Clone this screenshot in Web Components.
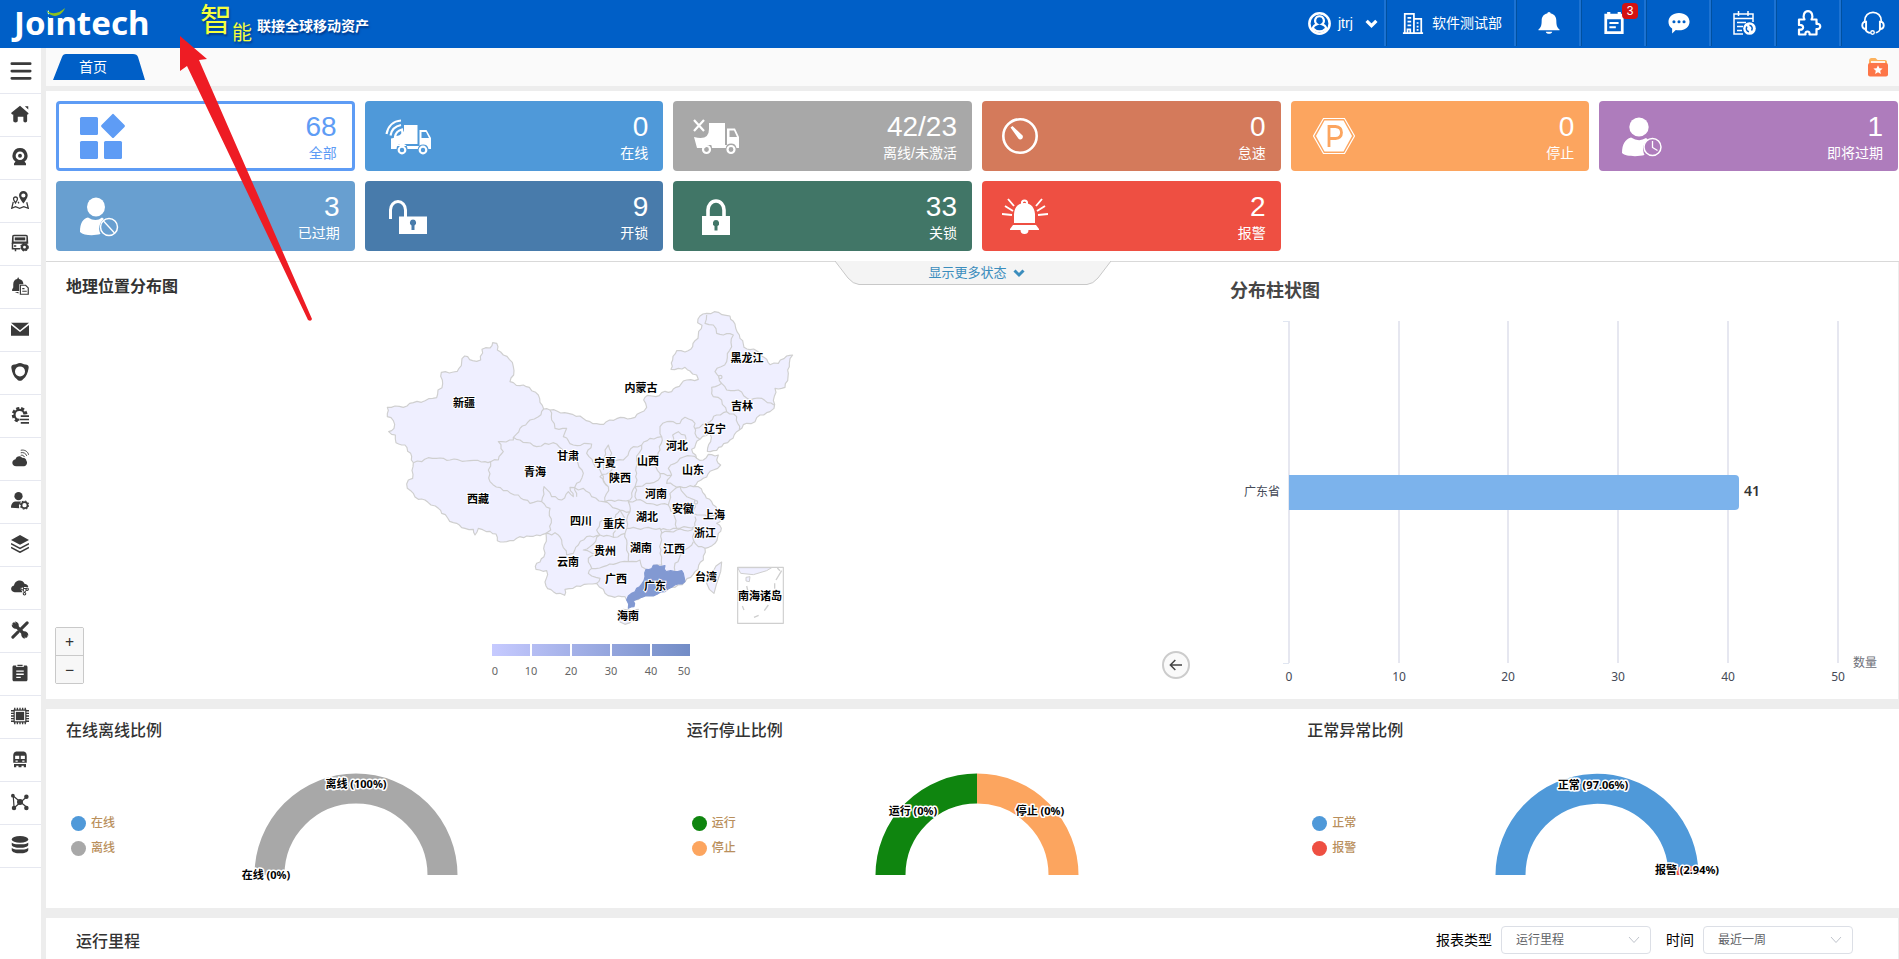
<!DOCTYPE html>
<html lang="zh-CN">
<head>
<meta charset="utf-8">
<title>首页</title>
<style>
html,body{margin:0;height:100%}
body{font-family:"Liberation Sans","Noto Sans CJK SC",sans-serif;font-size:14px;color:#333;background:#fff;overflow:hidden}
</style>
</head>
<body>
<dashboard-app></dashboard-app>
<script>
const ICONS = {
  menu:[24,'<path d="M2 4h20M2 12h20M2 20h20" stroke="currentColor" stroke-width="3" stroke-linecap="round"/>'],
  home:[24,'<path d="M12 1 23 10.500c1 1-.4 2.500-1.500 2V21c0 3-5 3-5 0v-5.500H9V21c0 3-6 3-6 0v-8.500H1.500L0 10.500z"/><path d="M18.500 1.500H23V6z"/>'],
  webcam:[24,'<path fill-rule="evenodd" d="M12 0a10 10 0 0 1 6 18l2 2.500V23H4v-2.500L6 18A10 10 0 0 1 12 0zm0 4.500a5.800 5.800 0 1 0 0 11.600 5.800 5.800 0 0 0 0-11.600z"/><circle cx="12" cy="10.300" r="2.600"/>'],
  route:[24,'<path fill-rule="evenodd" d="M16.500 0a5.800 5.800 0 0 1 5.800 5.800c0 3.500-3.200 7.200-5.800 11-2.600-3.800-5.800-7.500-5.800-11A5.800 5.800 0 0 1 16.500 0zm0 3.200a2.800 2.800 0 1 0 0 5.600 2.800 2.800 0 0 0 0-5.600z"/><path d="M6 8a2.600 2.600 0 0 1 2.600 2.600C8.600 12.500 7 14 6 15.800 5 14 3.400 12.500 3.400 10.600A2.600 2.600 0 0 1 6 8zM3 14.500 1 23l5-2 5.500 2 5.500-2 6 2-2-8M9.500 14.500l1 2M6 17.500v0" fill="none" stroke="currentColor" stroke-width="1.700"/>'],
  bus:[24,'<path fill-rule="evenodd" d="M4 1h16c1.500 0 2.500 1 2.500 2.500L23 12v1H1v-1l.5-8.500C1.500 2 2.500 1 4 1zm-.5 2v7h17V3z"/><path d="M5 4.500h14v4H5z"/><path d="M2 12v7.500h10M6 20v3M4 16h3" fill="none" stroke="currentColor" stroke-width="2"/><circle cx="18" cy="17.500" r="3.400" fill="none" stroke="currentColor" stroke-width="3"/><circle cx="18" cy="17.500" r="5" fill="none" stroke="currentColor" stroke-width="1.500" stroke-dasharray="2.200 1.900"/>'],
  bellDoc:[24,'<path d="M9.500 0l1.300 2.500c4 .8 5.700 3.500 5.700 7H11v9H1.500v-1.800L3 14V9.500c0-4 2-6.300 5.200-7z"/><path d="M5 20h5v2z"/><path d="M12.500 11h7l3.500 3.500V23H12.500zM15 15.500h3M15 19h6" fill="none" stroke="currentColor" stroke-width="1.600"/>'],
  mail:[24,'<path d="M0 3.500h24L12 13.500z"/><path d="M0 6.500l12 9.500 12-9.500V21H0z"/>'],
  shield:[24,'<path fill-rule="evenodd" d="M12 0c3 0 4.500 2 7 2 2.800-.3 5 1.500 4.500 4.500-1 6.500-3 12-7.500 15-2 3-6 3-8 0C3.500 18.500 1.500 13 .5 6.500 0 3.500 2.200 1.700 5 2c2.500 0 4-2 7-2zm0 4.500a6.700 6.700 0 1 0 0 13.400 6.700 6.700 0 0 0 0-13.400z"/>'],
  gearList:[24,'<path d="M20 11a8.500 8.500 0 1 0-9 9.200" fill="none" stroke="currentColor" stroke-width="4" stroke-dasharray="4 2.400"/><path d="M18 11a6.700 6.700 0 1 0-7 7.500" fill="none" stroke="currentColor" stroke-width="3"/><path d="M13 13.500h11M11.500 18h12.500M13 22.500h11" stroke="currentColor" stroke-width="2.200"/>'],
  cloudWifi:[24,'<path d="M7 23c-6.500 0-7-8-1-9.200 1-4.500 6.500-5.500 9-2 4 0 5.500 2 5.500 4 2 2 .5 7.200-3 7.200z"/><path d="M13 8.500c2-.8 4 0 5 2.300M13 5c3.500-1 7 .8 8 4.200M13 1.700c5-1.200 9.500 1.600 10.500 6" fill="none" stroke="currentColor" stroke-width="1.200"/>'],
  userGear:[24,'<circle cx="10" cy="5.500" r="5.500"/><path d="M0 21c0-6 3-8.500 7-8.500h6.500l-3 5.500.5 3.500z"/><circle cx="18" cy="17.500" r="4" fill="none" stroke="currentColor" stroke-width="2.200"/><circle cx="18" cy="17.500" r="5.500" fill="none" stroke="currentColor" stroke-width="1.400" stroke-dasharray="2.200 2.100"/>'],
  layers:[24,'<path d="M12 0 24 6.500 12 13 0 6.500z"/><path d="M0 11.500 12 18l12-6.500M0 16.500 12 23l12-6.500" fill="none" stroke="currentColor" stroke-width="2"/>'],
  cloudFilter:[24,'<path d="M5 19c-6 0-6.500-8-1-9 .8-7 11-9.500 14-2.500 3.500.5 5 2.500 5 4.500l-9.500 0-1 2.500 3 4.500z"/><circle cx="15" cy="14" r="1.900" fill="none" stroke="currentColor" stroke-width="1.400"/><circle cx="21.500" cy="15" r="1.700" fill="none" stroke="currentColor" stroke-width="1.400"/><circle cx="18" cy="21" r="1.700" fill="none" stroke="currentColor" stroke-width="1.400"/><path d="M16 15.500l2 4 3-4M17 14h4" fill="none" stroke="currentColor" stroke-width="1.300"/>'],
  tools:[24,'<path d="M4 4l16 16" stroke="currentColor" stroke-width="4.400" stroke-linecap="round"/><path d="M21.500 2.500l-8 8M9.500 14.500l-7 7" stroke="currentColor" stroke-width="4" stroke-linecap="round"/><path d="M1 4.500a5 5 0 0 0 6.500 5.500L10 7.500A5 5 0 0 0 5 .8L7 4 4.500 6.500zM23 19.500a5 5 0 0 0-6.500-5.500L14 16.500a5 5 0 0 0 5 6.700L17.500 20l2-2z"/>'],
  clipboard:[24,'<path fill-rule="evenodd" d="M4 2h3v2h10V2h3c1.200 0 2 .8 2 2v17c0 1.200-.8 2-2 2H4c-1.200 0-2-.8-2-2V4c0-1.200.8-2 2-2zm3 6.500v1.800h10V8.500zm0 4.200v1.800h10v-1.800zM7 17v1.800h6V17z"/><path d="M8.500 1h7v2h-7z"/>'],
  chip:[24,'<path d="M6.500 6.500h11v11h-11z"/><path d="M4.200 4.200h15.600v15.600H4.200z" fill="none" stroke="currentColor" stroke-width="1.600"/><path d="M5 1v3M8.500 1v3M12 1v3M15.500 1v3M19 1v3M5 20v3M8.500 20v3M12 20v3M15.500 20v3M19 20v3M0 5h4M0 8.500h4M0 12h4M0 15.500h4M0 19h4M20 5h4M20 8.500h4M20 12h4M20 15.500h4M20 19h4" stroke="currentColor" stroke-width="1.800"/>'],
  train:[24,'<path fill-rule="evenodd" d="M8 2h8c4 0 5 3 5 6v9H3V8c0-3 1-6 5-6zM5.500 7.500V12H11V7.500zm7.500 0V12h5.500V7.500zM6 14v1.500h3V14zm9 0v1.500h3V14z"/><path d="M8 .8h8M4 18.500h16V23h-3v-2h-3v2h-4v-2H7v2H4z" fill-rule="evenodd"/>'],
  nodes:[24,'<path d="M3 4l18 15M21 5 4 20M3 4l1 14" stroke="currentColor" stroke-width="1.600"/><circle cx="12" cy="12" r="4"/><circle cx="2.500" cy="3.500" r="2.500"/><circle cx="20.500" cy="5" r="3"/><circle cx="4" cy="20" r="3"/><circle cx="20.500" cy="20" r="3"/>'],
  database:[24,'<ellipse cx="12" cy="4.500" rx="11" ry="4.500"/><path d="M1 8.500c2 3.500 20 3.500 22 0v3.500c-1 5-21 5-22 0zM1 15.500c2 3.500 20 3.500 22 0V19c-1 5.500-21 5.500-22 0z"/>'],
  avatar:[24,'<circle cx="12" cy="12" r="10.600" fill="none" stroke="currentColor" stroke-width="2.600"/><path d="M12 4.500a4.500 4.500 0 0 1 2.500 8.300c2.500.8 4 2 4.600 4.200a9.500 9.500 0 0 1-14.200 0c.6-2.200 2.100-3.400 4.600-4.200A4.500 4.500 0 0 1 12 4.500z" fill="none" stroke="currentColor" stroke-width="2.200"/>'],
  chevron:[24,'<path d="M3 7l9 9 9-9" fill="none" stroke="currentColor" stroke-width="6"/>'],
  building:[24,'<path d="M3 23V2h10v21M13 7.500h8V23M1 23h22M6 6.500h4M6 10.500h4M6 14.500h4M16 12h2M16 16h2M16 19.500h2M6 23v-4h3v4" fill="none" stroke="currentColor" stroke-width="1.900"/>'],
  bell:[24,'<path d="M12 0c1.200 0 1.800.8 1.900 1.700C18 2.500 20 5.500 20 9.500c0 5 .8 7.500 3.500 9.500v1H.5v-1C3.200 17 4 14.500 4 9.500c0-4 2-7 6.100-7.800C10.200.8 10.800 0 12 0zM8.500 21.500h7c-.5 3-6.500 3-7 0z"/>'],
  task:[24,'<path fill-rule="evenodd" d="M1.500 2h3V0H8v2h8V0h3.500v2h3v22h-21zm3 6v13h15V8zM7 11h10v2.200H7zm0 4.500h7v2.200H7z"/>'],
  chat:[24,'<path fill-rule="evenodd" d="M12 1c6.600 0 11.500 4 11.500 9.500S18.600 20 12 20c-1.500 0-2.500-.2-3.500-.4L4.500 23.500V18C1.800 16.300.5 13.500.5 10.500.5 5 5.400 1 12 1zM6.500 9a1.700 1.700 0 1 0 0 3.400 1.700 1.700 0 0 0 0-3.400zm5.500 0a1.700 1.700 0 1 0 0 3.400A1.700 1.700 0 0 0 12 9zm5.500 0a1.700 1.700 0 1 0 0 3.400 1.700 1.700 0 0 0 0-3.400z"/>'],
  schedule:[24,'<path d="M21 11V3H2v20h9M2 7.500h19M6.500 0v5M16 0v5M5 11.500h9M5 15.500h6M5 19.500h5" fill="none" stroke="currentColor" stroke-width="1.500"/><circle cx="17.500" cy="17.500" r="6.300"/><path d="M15 15.500a3.300 3.300 0 0 0 2 5.300M19.500 19.500a3.300 3.300 0 0 0-2-5.300" fill="none" stroke="#005fc7" stroke-width="1.500"/>'],
  puzzle:[26,'<path d="M3 12V9.500h5.500C6.500 6 8 1.200 12 1.200s5.500 4.800 3.500 8.300h5V14c5-1.200 5 6 0 5v5.500h-7c1-4-5-4-4 0H3V19.500c5.500 1.500 5.500-5.500 0-4.500z" fill="none" stroke="currentColor" stroke-width="2.200" stroke-linejoin="round"/>'],
  headset:[26,'<path d="M4 13v-2C4 5 8 1.500 13 1.500S22 5 22 11v2" fill="none" stroke="currentColor" stroke-width="1.900"/><path d="M5.500 11.500v8C0 20 0 11.500 5.500 11.500zM20.500 11.500v8c5.500.5 5.500-8 0-8zM4.500 19.500c1 3 3 4 6 4.200" fill="none" stroke="currentColor" stroke-width="2.100"/><circle cx="12.500" cy="23.300" r="1.900" fill="none" stroke="currentColor" stroke-width="1.500"/><path d="M21 19.500c-1 2.500-2.500 3.700-5 4" fill="none" stroke="currentColor" stroke-width="1.500"/>'],
  favorites:[20,'<path d="M1 4c0-2 1-3 2.500-3h4l2 2H17c1 0 2 .8 2 2v3H1z" fill="#fcb15c"/><path d="M3 4h14v3H3z" fill="#fff3e6"/><rect y="6" width="20" height="13.500" rx="2" fill="#fd7648"/><path d="M10 8.200l1.400 3 3.200.3-2.400 2.200.7 3.200-2.900-1.700-2.900 1.700.7-3.200-2.400-2.200 3.200-.3z" fill="#fff"/>'],
  arrowLeft:[24,'<path d="M21 12H4M11 4.500 3.500 12l7.500 7.500" fill="none" stroke="currentColor" stroke-width="2.200"/>'],
  all:[50,'<rect x="4" y="6" width="18" height="18" rx="1.500"/><rect x="4" y="30" width="18" height="18" rx="1.500"/><rect x="28" y="30" width="18" height="18" rx="1.500"/><path d="M36 3.500q1-1.500 2 0l10.500 10.500q1 1 0 2L38 26.500q-1 1-2 0L25.500 16q-1-1 0-2z"/>'],
  online:[50,'<path d="M19 14h13.500v19H14l-1 2H6v-7.500l7.500-1.500L19 20z"/><path fill-rule="evenodd" d="M34.500 19h7L46 27v11h-2.500a5.500 5.500 0 0 0-10.800 0H22.500a5.500 5.500 0 0 0-11 0H6v-3h28.500zm2 2v6h7.500l-3-6z"/><circle cx="17" cy="39" r="3.300" fill="none" stroke="currentColor" stroke-width="2.200"/><circle cx="38" cy="39" r="3.300" fill="none" stroke="currentColor" stroke-width="2.200"/><path d="M5 26.500v-3q2-5 10-7.500h2v5q0 3-3 4z" fill="#4f99d9"/><path d="M1.500 23C3 15 8.500 10 16 9.500M5.500 24.500C6.500 18.500 10.500 15 16 14M10 26c.5-4 3-6.500 7-7.500l.5 4q-2 4-7.500 3.500z" fill="none" stroke="currentColor" stroke-width="2.200"/>'],
  offline:[50,'<path d="M16 12h16v22H14l-2 3H4L1 26q15 4 15-8z"/><path fill-rule="evenodd" d="M34 17.500h8L46 26v11h-2.500a5.500 5.500 0 0 0-10.800 0H19a5.500 5.500 0 0 0-11 0H4v-3h30zm2.500 2V26h7.500l-3-6.500z"/><circle cx="13.500" cy="38.500" r="3.500" fill="none" stroke="currentColor" stroke-width="2.200"/><circle cx="38" cy="38.500" r="3.500" fill="none" stroke="currentColor" stroke-width="2.200"/><path d="M1 9l10 11M11 9 1 20" stroke="currentColor" stroke-width="2.200"/>'],
  idle:[50,'<circle cx="18" cy="25" r="16.700" fill="none" stroke="currentColor" stroke-width="2.600"/><path d="M8.500 16.500 10.500 15l9 8.500a2.600 2.600 0 1 1-3.500 3.500z"/>'],
  parking:[50,'<path d="M12.500 7.500h21L43.500 25l-10 17.500h-21L2.500 25z" fill="none" stroke="currentColor" stroke-width="1.200"/><path d="M13.500 9.500h19L41 25l-8.500 15.500h-19L5 25z"/><path d="M18 36V15.500h6.500q6 .5 6 6t-6 6H18" fill="none" stroke="#fca55f" stroke-width="2.800"/>'],
  expiring:[50,'<ellipse cx="20" cy="16" rx="9.700" ry="9.500"/><path d="M3 42c0-9 3-13.500 9-15.500q8 5 15 .5l2 1.500c-5 4-6 10-3.500 15.500-7 2-19 1.500-22.500-2z"/><circle cx="33.500" cy="36" r="8.500" fill="none" stroke="currentColor" stroke-width="1.500"/><path d="M33.500 30v6.500l5 3" fill="none" stroke="currentColor" stroke-width="1.300"/>'],
  expired:[50,'<ellipse cx="20" cy="16" rx="9" ry="9.500"/><path d="M4 41c0-9 3-13.500 8-14.500q8 5 14 0l2 1.500c-5 4-6 10-3.500 15-7 2-17 1.500-20.500-2z"/><circle cx="33" cy="36" r="8.500" fill="none" stroke="currentColor" stroke-width="1.500"/><path d="M27.500 30l11 12" fill="none" stroke="currentColor" stroke-width="1.300"/>'],
  unlock:[50,'<path d="M5.500 28V19a7.500 8.500 0 0 1 15 0v7" fill="none" stroke="currentColor" stroke-width="3"/><path fill-rule="evenodd" d="M14 25.500h28V43H14zm14 3a3.200 3.200 0 0 0-1.500 6V39h3v-4.500a3.200 3.200 0 0 0-1.500-6z"/>'],
  lock:[50,'<path d="M15 26v-7a8 9 0 0 1 16 0v7" fill="none" stroke="currentColor" stroke-width="3.600"/><path fill-rule="evenodd" d="M9 25h28v19H9zm14 4a3.200 3.200 0 0 0-1.500 6v4.500h3V35a3.200 3.200 0 0 0-1.500-6z"/>'],
  alarm:[50,'<circle cx="22.500" cy="12" r="2.600" fill="none" stroke="currentColor" stroke-width="2"/><path d="M22.500 12c7 0 10 5 10.500 11v9H12v-9c.5-6 3.500-11 10.500-11zM11 34h23l3 4v1H26.500q0 4-4 4t-4-4H8v-1z"/><path d="M6 8l6 7M3 15l8 5M0 23l10 1M40 8l-6 7M43 15l-8 5M46 23l-10 1" stroke="currentColor" stroke-width="1.900"/>']
};

class BaseElement extends HTMLElement {
  connectedCallback() {
    if (this.shadowRoot) return;
    this.attachShadow({ mode: 'open' }).innerHTML = `<style>*{box-sizing:border-box}</style>` + this.render();
  }
  attr(name, fallback = '') { return this.getAttribute(name) || fallback; }
}

class UiIcon extends BaseElement {
  render() {
    const [box, body] = ICONS[this.attr('name')];
    const size = this.attr('size', '20');
    return `<style>:host{display:inline-block;flex:none;width:${size}px;height:${size}px}svg{display:block}</style>
      <svg width="${size}" height="${size}" viewBox="0 0 ${box} ${box}" fill="currentColor" aria-hidden="true">${body}</svg>`;
  }
}

class AppHeader extends BaseElement {
  render() {
    return `<style>
      :host{display:flex;height:48px;background:#005fc7;color:#fff;overflow:hidden}
      .logo{position:relative;margin-left:14px;width:172px;font:700 33px/46px "Noto Sans",sans-serif;color:#fff;text-decoration:none}
      .logo svg{position:absolute;left:31px;top:7px}
      .slogan{display:flex;flex:1;align-items:flex-start;padding-left:14px;margin:0;font-weight:700;color:#fff;text-shadow:1px 2px 2px #00398a}
      .big{font-size:32px;line-height:40px;color:#f5ff3d;font-weight:400}
      .mid{font-size:20px;line-height:66px;color:#f5ff3d;font-weight:400}
      .rest{font-size:14px;line-height:52px;padding-left:5px}
      nav{display:flex}
      button{display:flex;align-items:center;justify-content:center;position:relative;width:65px;height:46px;margin:0;padding:0 0 0 3px;border:0;border-left:2px solid #1c72d2;box-shadow:inset 1px 0 #00509f;background:none;color:#fff;font:14px/20px "Liberation Sans","Noto Sans CJK SC",sans-serif;white-space:nowrap}
      .user{width:auto;border:0;box-shadow:none;padding:0 6px 0 0}
      .user span{width:27px;margin-left:7px;text-align:left}
      .dept{width:130px;justify-content:flex-start;padding-left:16px}.dept span{margin-left:8px}
      button:last-child{width:60px;padding-left:6px}
      .badge{position:absolute;left:41px;top:3px;width:16px;height:16px;border-radius:4px;background:#d31111;font-size:12px;line-height:16px;text-align:center}
    </style>
    <a class="logo" href="#">Jointech<svg width="22" height="12" viewBox="0 0 22 12"><path d="M4 0h14v11H4z" fill="#005fc7"/><path d="M1 3c6 5 12 4 19-2-3 8-13 12-19 2z" fill="#8cc11f"/><path d="M4 7q7 5 12-1-5 6-12 1z" fill="#3d8f1d"/></svg></a>
    <p class="slogan"><span class="big">智</span><span class="mid">能</span><span class="rest">联接全球移动资产</span></p>
    <nav>
      <button class="user"><ui-icon name="avatar" size="23"></ui-icon><span>jtrj</span><ui-icon name="chevron" size="13"></ui-icon></button>
      <button class="dept"><ui-icon name="building" size="22"></ui-icon><span>软件测试部</span></button>
      <button aria-label="通知"><ui-icon name="bell" size="22"></ui-icon></button>
      <button aria-label="任务"><ui-icon name="task" size="22"></ui-icon><span class="badge">3</span></button>
      <button aria-label="消息"><ui-icon name="chat" size="22"></ui-icon></button>
      <button aria-label="日程"><ui-icon name="schedule" size="24"></ui-icon></button>
      <button aria-label="插件"><ui-icon name="puzzle" size="26"></ui-icon></button>
      <button aria-label="客服"><ui-icon name="headset" size="24"></ui-icon></button>
    </nav>`;
  }
}

class SideNav extends BaseElement {
  render() {
    const names = ['home','webcam','route','bus','bellDoc','mail','shield','gearList','cloudWifi','userGear','layers','cloudFilter','tools','clipboard','chip','train','nodes','database'];
    return `<style>
      :host{display:flex;flex-direction:column;flex:none;width:46px;background:#fff;border-right:5px solid #ededed;color:#3a3a3a}
      a,button{display:flex;flex:none;align-items:center;justify-content:center;height:43px;padding:0 1px 2px 0;border:0;border-bottom:1px solid #e6e8f0;background:none;color:inherit}
      button{height:46px;padding:0}
    </style><button aria-label="菜单"><ui-icon name="menu" size="22"></ui-icon></button>
    ${names.map(n => `<a href="#${n}" aria-label="${n}"><ui-icon name="${n}" size="18"></ui-icon></a>`).join('')}`;
  }
}

class TabStrip extends BaseElement {
  render() {
    return `<style>
      :host{display:flex;align-items:center;justify-content:space-between;height:38px;background:#fafafa;padding:0 11px 0 7px}
      a{width:92px;height:26px;background:#005fc7;color:#fff;font-size:14px;line-height:26px;padding-left:26px;text-decoration:none;clip-path:path("M0 26 9 3Q10 0 13 0H80Q84 0 85 3L92 26z")}
    </style><a href="#home">首页</a><ui-icon name="favorites" size="20"></ui-icon>`;
  }
}

class StatusCard extends BaseElement {
  render() {
    const c = this.attr('color');
    const outlined = this.hasAttribute('outlined');
    return `<style>
      :host{display:flex;justify-content:space-between;height:70px;border-radius:4px;overflow:hidden;padding:10px 15px 0 20px;
        ${outlined ? `background:#fff;color:${c};border:3px solid ${c};padding:7px 15px 0 17px` : `background:${c};color:#fff`}}
      div{text-align:right}
      strong{display:block;font:400 28px/32px "Liberation Sans",sans-serif}
      span{display:block;font-size:14px;line-height:20px}
    </style><ui-icon name="${this.attr('icon')}" size="50"></ui-icon><div><strong>${this.attr('value')}</strong><span><slot></slot></span></div>`;
  }
}

class StatusPanel extends BaseElement {
  render() {
    return `<style>
      :host{display:grid;grid-template-columns:repeat(6,1fr);gap:10px;padding:10px 0 10px 10px;background:#fff;border-bottom:1px solid #d9d9d9}
    </style>
    <status-card outlined icon="all" value="68" color="#5e9cf5">全部</status-card>
    <status-card icon="online" value="0" color="#4f99d9">在线</status-card>
    <status-card icon="offline" value="42/23" color="#a8a8a8">离线/未激活</status-card>
    <status-card icon="idle" value="0" color="#d47a5b">怠速</status-card>
    <status-card icon="parking" value="0" color="#fca55f">停止</status-card>
    <status-card icon="expiring" value="1" color="#ae7cbc">即将过期</status-card>
    <status-card icon="expired" value="3" color="#689fd0">已过期</status-card>
    <status-card icon="unlock" value="9" color="#487bab">开锁</status-card>
    <status-card icon="lock" value="33" color="#417667">关锁</status-card>
    <status-card icon="alarm" value="2" color="#ee4f42">报警</status-card>`;
  }
}

/* Coast and province borders, three units to a pixel. */
const COUNTRY = '52,322 75,318 100,322 130,308 165,302 200,293 204,270 216,263 214,217 262,214 284,168 308,182 332,180 336,148 360,144 368,128 380,130 382,150 400,165 418,178 430,200 431,225 420,245 450,257 478,262 505,285 521,327 540,330 595,340 630,348 660,365 690,373 740,356 795,352 810,338 830,322 821,300 832,286 858,290 875,278 905,275 918,262 950,240 985,238 980,225 960,213 945,202 925,205 903,208 908,180 920,152 945,156 968,140 985,105 996,76 983,68 990,48 1010,40 1045,37 1080,48 1095,72 1108,105 1122,142 1160,152 1190,178 1200,194 1225,190 1250,168 1268,165 1258,190 1255,220 1245,262 1215,265 1212,325 1200,335 1170,345 1155,365 1130,370 1108,390 1080,420 1055,440 1030,452 1012,454 1022,425 1020,400 990,418 965,448 980,475 1000,480 1015,463 1045,465 1040,480 1052,495 1030,510 1000,535 970,560 985,560 1005,585 1025,605 1040,630 1055,650 1050,665 1040,670 1054,685 1045,700 1035,730 1005,745 1000,780 975,815 945,845 915,862 880,868 850,885 815,890 795,900 770,900 765,890 735,892 705,880 700,868 680,850 655,852 620,858 585,868 584,886 570,880 550,875 528,858 530,812 498,808 500,790 522,770 528,700 500,705 470,708 440,715 410,725 382,722 378,702 350,695 325,685 315,705 310,688 285,685 250,668 215,640 205,625 165,600 145,598 112,565 115,540 128,535 130,488 122,460 105,435 78,428 76,405 56,395 72,385 70,362 52,350 52,322';
const GUANGDONG = '850,796 870,800 885,797 888,815 915,815 935,812 942,830 945,845 905,862 885,875 850,888 815,892 790,902 792,920 775,925 770,900 785,880 800,865 815,852 825,830 828,808 845,806 850,796';
const BORDERS = [
  '130,488 155,485 175,473 200,475 240,480 300,482 345,485 362,485',
  '362,485 385,480 400,455 385,425 430,420 430,412 450,385 480,360 505,350 521,327',
  '540,330 545,360 555,385 590,385 580,410 610,435 665,432 650,460 670,490 690,510 700,540 715,560',
  '430,412 450,420 500,440 525,430 560,432 590,470 620,480 640,520 630,545 615,560 620,590',
  '362,485 355,510 360,545 400,572 445,585 480,610 515,605',
  '515,605 522,560 545,590 575,600 595,575 610,590 600,562 625,570 640,565 665,590 700,605',
  '515,605 540,625 542,690 528,700',
  '528,700 545,705 555,698 575,720 590,765 610,760 625,735 650,710 690,705',
  '700,605 750,630 735,655 690,665 680,690 690,705 730,712 740,680 765,665 750,630 780,635',
  '690,705 660,740 640,750 675,765 655,775 665,805 700,800 740,790 775,785 770,740 765,700 730,712',
  '665,805 655,820 690,835 680,850',
  '775,785 810,780 815,800 828,808',
  '765,700 770,685 800,685 870,685 875,720 870,760 875,795 850,796',
  '780,635 770,660 770,685','780,635 775,605 800,600 850,612 895,615 910,640 920,685 870,690',
  '800,600 795,560 840,550 865,540 870,520 905,525 890,550 930,560 900,580 895,615',
  '930,560 950,590 975,600 970,640 1005,645 1045,650','975,650 975,680 920,685',
  '705,605 715,560 690,530 725,510 730,485 760,480 790,440 815,435 800,480 800,520 795,560 780,600',
  '705,605 745,600 780,600','815,435 840,415 875,410 870,450 855,490 870,520',
  '875,410 870,380 890,365 930,370 945,352 975,370 975,400 990,418',
  '910,425 908,405 925,395 945,405 945,425 955,450 930,445 925,425',
  '905,525 895,505 930,475 965,468 980,475','930,560 970,560',
  '975,385 1010,370 1040,345 1070,335 1100,350 1108,390',
  '1070,335 1055,300 1030,290 1025,262 1055,250 1070,270 1105,270 1140,300 1175,295 1212,315',
  '1055,250 1035,215 1070,185 1090,105 1040,100 1030,75 1005,70 1010,45',
  '975,680 970,720 985,740 1005,745','875,700 920,690 965,690 975,680',
  '970,725 940,760 915,790 915,815','700,510 705,450 715,435 725,460 715,480 735,490'
];
const wander = (text) => {
  const pts = text.split(' ').map(p => p.split(',').map(Number));
  let d = `M${pts[0]}`;
  for (let i = 1; i < pts.length; i++) {
    const [ax, ay] = pts[i - 1], [bx, by] = pts[i];
    const len = Math.hypot(bx - ax, by - ay), n = Math.max(1, Math.round(len / 11));
    for (let k = 1; k < n; k++) {
      const t = k / n, off = Math.sin(ax * 1.3 + ay * 2.1 + k * 4.7) * 3.5;
      d += `L${Math.round(ax + (bx - ax) * t - (by - ay) / len * off)},${Math.round(ay + (by - ay) * t + (bx - ax) / len * off)}`;
    }
    d += `L${bx},${by}`;
  }
  return d;
};

class RegionMap extends BaseElement {
  render() {
    const names = [['新疆',94,103],['西藏',108,199],['青海',165,172],['甘肃',198,156],['内蒙古',271,88],['宁夏',235,163],['陕西',250,178],['山西',278,161],['河北',307,146],['山东',323,170],['河南',286,194],['安徽',313,209],['上海',344,215],['浙江',335,233],['湖北',277,217],['重庆',244,224],['四川',211,221],['贵州',235,251],['湖南',271,248],['江西',304,249],['云南',198,262],['广西',246,279],['广东',285,286],['海南',258,316],['台湾',336,277],['南海诸岛',390,296],['黑龙江',377,58],['吉林',372,106],['辽宁',345,129]];
    return `<style>
      :host{display:block;position:relative;padding:13px 0 9px}
      h2{margin:0 20px;font-size:16px;line-height:24px;font-weight:700;color:#333}
      svg.map{display:block;margin:0 auto}
      .names text{font:700 11px "Noto Sans CJK SC",sans-serif;fill:#000;stroke:#fff;stroke-width:2px;paint-order:stroke;text-anchor:middle}
      .scale text{font:11px "Noto Sans",sans-serif;fill:#666;text-anchor:middle}
      .zoom{position:absolute;left:9px;bottom:15px;display:flex;flex-direction:column;width:29px;border:1px solid #c9c9c9;border-radius:2px;background:#c9c9c9;gap:1px}
      .zoom button{height:27px;border:0;padding:0;background:#f7f7f7;color:#333;font:16px/24px "Noto Sans",sans-serif}
    </style>
    <h2>地理位置分布图</h2>
    <svg class="map" width="450" height="391" viewBox="-4 -1 450 391" role="img" aria-label="地理位置分布图">
      <defs><linearGradient id="ramp" gradientUnits="userSpaceOnUse" x1="122" x2="320" y1="0" y2="0"><stop stop-color="#c6caff"/><stop offset="1" stop-color="#728cc6"/></linearGradient></defs>
      <g transform="scale(.33333)" fill="#efefff" stroke="#cfcfcf" stroke-width="3.500" stroke-linejoin="round">
        <path d="${wander(COUNTRY)}Z"/>
        <path fill="none" d="${BORDERS.map(wander).join('')}"/>
        <circle cx="1051" cy="231" r="5"/><circle cx="978" cy="607" r="5"/>
        <path d="M742,940 760,928 785,932 805,928 800,945 780,968 765,973 750,966Z"/>
        <path d="M1055,786 1038,798 1010,850 1018,868 1032,880 1040,850 1052,815Z"/>
        <path fill="#8299d2" stroke="#8299d2" d="${wander(GUANGDONG)}Z"/>
        <path fill="#fff" d="M1103,802H1240V970H1103z"/>
        <path stroke-width="3" d="M1103,803 1112,820 1150,824 1190,812 1205,803zM1128,832 1140,830 1138,845 1128,843z"/>
        <path fill="none" stroke-width="4" d="M1222,804 1230,812M1235,812 1218,840M1214,850V866M1130,858 1133,870M1117,918 1122,930M1195,915 1183,932M1152,952 1166,946M1207,880 1203,895"/>
      </g>
      <g class="names">${names.map(([n, x, y]) => `<text x="${x}" y="${y + 4}">${n}</text>`).join('')}</g>
      <g class="scale"><path fill="url(#ramp)" d="M122 344h38v12h-38zM162 344h38v12h-38zM202 344h38v12h-38zM242 344h38v12h-38zM282 344h38v12h-38z"/>
      ${[[0,125],[10,161],[20,201],[30,241],[40,281],[50,314]].map(([n, x]) => `<text x="${x}" y="375">${n}</text>`).join('')}</g>
    </svg>
    <div class="zoom"><button aria-label="放大">+</button><button aria-label="缩小">−</button></div>`;
  }
}

class BarChart extends BaseElement {
  render() {
    const ticks = [0, 10, 20, 30, 40, 50].map((n, i) => [n, 153 + i * 110 - (i > 1 ? 1 : 0)]);
    return `<style>
      :host{display:block;position:relative;padding-top:15px;border-right:1px solid #ededed}
      h2{margin:0 0 0 94px;font:700 18px/24px "Noto Sans CJK SC",sans-serif;color:#464646}
      svg{display:block;width:100%}
      text{font:12px "Noto Sans","Noto Sans CJK SC",sans-serif;fill:#454a57}
      .mid{text-anchor:middle}.end{text-anchor:end}.value{font-weight:600;font-size:14px;fill:#333}.unit{fill:#6e7079}
      button{position:absolute;left:26px;bottom:20px;display:grid;place-items:center;width:28px;height:28px;padding:0;border:2px solid #ccc;border-radius:50%;background:#fafafa;color:#444}
    </style>
    <h2>分布柱状图</h2>
    <svg viewBox="0 0 762 397" role="img" aria-label="分布柱状图">
      <path d="${ticks.map(([, x]) => `M${x} 20V362`).join('')}" stroke="#e6e7f0" stroke-width="2"/>
      <path d="M147 20.500h6M147 362.500h6" stroke="#e0e6f1"/>
      <path d="M153 174h446q4 0 4 4v27q0 4-4 4H153z" fill="#7cb3ec"/>
      ${ticks.map(([n, x]) => `<text class="mid" x="${x}" y="380">${n}</text>`).join('')}
      <text class="end" x="144" y="195">广东省</text><text class="value" x="608" y="195">41</text><text class="unit" x="717" y="366">数量</text>
    </svg>
    <button aria-label="返回"><ui-icon name="arrowLeft" size="16"></ui-icon></button>`;
  }
}

class RatioGauge extends BaseElement {
  render() {
    const parts = JSON.parse(this.attr('parts'));
    const at = (f) => { const a = Math.PI * (1 - f); return `${(130 + 86.5 * Math.cos(a)).toFixed(1)} ${(110 - 86.5 * Math.sin(a)).toFixed(1)}`; };
    let sum = 0;
    const arcs = parts.map(p => { const from = sum; sum += p.share; return p.share ? `<path d="M${at(from)}A86.500 86.500 0 0 1 ${at(sum)}" stroke="${p.color}"/>` : ''; }).join('');
    return `<style>
      :host{display:block;padding:10px 0 18px 20px}
      h2{margin:0 0 22px;font-size:16px;line-height:24px;font-weight:500;color:#333}
      .body{display:grid;grid-template-columns:155px 260px;padding-left:5px}
      ul{list-style:none;margin:46px 0 0;padding:0}
      li{display:flex;align-items:center;gap:5px;font-size:12px;line-height:25px;font-weight:500;color:#b98f5c}
      i{width:15px;height:15px;border-radius:50%}
      svg{display:block}
      text{font:700 11px "Noto Sans","Noto Sans CJK SC",sans-serif;text-anchor:middle;fill:#000;stroke:#fff;stroke-width:3px;stroke-linejoin:round;paint-order:stroke}
    </style>
    <h2><slot></slot></h2>
    <div class="body"><ul>${parts.map(p => `<li><i style="background:${p.color}"></i>${p.name}</li>`).join('')}</ul>
    <svg width="260" height="125" viewBox="0 0 260 125"><g fill="none" stroke-width="30">${arcs}</g>
    ${parts.map(p => `<text x="${p.x}" y="${p.y}">${p.name} (${p.label})</text>`).join('')}</svg></div>`;
  }
}

class MileagePanel extends BaseElement {
  render() {
    return `<style>
      :host{display:flex;flex:1;align-items:flex-start;background:#fff;padding:8px 45px 0 30px;border-right:1px solid #ededed}
      h2{flex:1;margin:0;font-size:16px;line-height:32px;font-weight:500;color:#333}
      label{font-size:14px;line-height:28px;color:#000;margin:0 9px 0 15px}
      .field{display:grid;width:150px;height:28px}
      .field>*{grid-area:1/1}
      select{appearance:none;width:150px;height:28px;padding:0 14px;border:1px solid #dcdfe6;border-radius:4px;background:#fff;color:#606266;font:12px "Liberation Sans","Noto Sans CJK SC",sans-serif}
      svg{place-self:center end;margin-right:11px;pointer-events:none;z-index:1}
    </style>
    <h2>运行里程</h2>
    <label for="type">报表类型</label><span class="field"><select id="type"><option>运行里程</option></select><svg width="12" height="8" viewBox="0 0 12 8"><path d="M1 1l5 5.500L11 1" fill="none" stroke="#c0c4cc"/></svg></span>
    <label for="time">时间</label><span class="field"><select id="time"><option>最近一周</option></select><svg width="12" height="8" viewBox="0 0 12 8"><path d="M1 1l5 5.500L11 1" fill="none" stroke="#c0c4cc"/></svg></span>`;
  }
}

class MoreToggle extends BaseElement {
  render() {
    return `<style>
      :host{display:block;width:276px;height:24px}
      button{position:relative;display:flex;align-items:center;justify-content:center;gap:6px;width:276px;height:24px;padding:0 0 0 8px;border:0;background:none;color:#3b8dbd;font:13px/26px "Liberation Sans","Noto Sans CJK SC",sans-serif}
      svg{position:absolute;left:0;top:0;z-index:-1}
    </style><button><svg width="276" height="24" viewBox="0 0 276 24"><path d="M0 0l13 17q5 6 11 6.500h228q6-.5 11-6.500L276 0" fill="#f4f4f4" stroke="#c8c8c8"/></svg>显示更多状态<ui-icon name="chevron" size="12"></ui-icon></button>`;
  }
}

class DashboardApp extends BaseElement {
  render() {
    const gauge = (title, parts) => `<ratio-gauge parts='${JSON.stringify(parts)}'>${title}</ratio-gauge>`;
    return `<style>
      :host{display:flex;flex-direction:column;height:100vh;overflow:hidden;position:relative}
      .shell{display:flex;flex:1;min-height:0}
      main{display:flex;flex:1;flex-direction:column;min-width:0;background:#ededed}
      tab-strip{margin-bottom:5px}
      .charts{position:relative;display:grid;grid-template-columns:10fr 7fr;background:#fff;margin-bottom:10px}
      more-toggle{position:absolute;z-index:1;top:-1px;left:calc(50% - 138px)}
      .gauges{display:grid;grid-template-columns:repeat(3,1fr);gap:9px;background:#fff;margin-bottom:10px}
      status-panel{padding-right:1px}
      .pointer{position:absolute;left:178px;top:34px;z-index:5;pointer-events:none}
    </style>
    <app-header></app-header>
    <div class="shell"><side-nav></side-nav>
    <main>
      <tab-strip></tab-strip>
      <status-panel></status-panel>
      <section class="charts"><region-map></region-map><bar-chart></bar-chart><more-toggle></more-toggle></section>
      <section class="gauges">
        ${gauge('在线离线比例', [{name:'在线',color:'#4f99d9',share:0,label:'0%',x:40,y:114},{name:'离线',color:'#a8a8a8',share:1,label:'100%',x:130,y:23}])}
        ${gauge('运行停止比例', [{name:'运行',color:'#0f850f',share:.5,label:'0%',x:66,y:50},{name:'停止',color:'#fca55f',share:.5,label:'0%',x:193,y:50}])}
        ${gauge('正常异常比例', [{name:'正常',color:'#4f99d9',share:.9706,label:'97.06%',x:126,y:24},{name:'报警',color:'#ee4f42',share:.0294,label:'2.94%',x:220,y:109}])}
      </section>
      <mileage-panel></mileage-panel>
    </main></div>
    <svg class="pointer" width="136" height="290" viewBox="178 34 136 290"><path d="M180 36 207 59 199 60 312 319q-1 3-4 1L187 66 180 71z" fill="#ee1c24"/></svg>`;
  }
}

const define = (name, cls) => customElements.define(name, cls);
define('ui-icon', UiIcon);
define('app-header', AppHeader);
define('side-nav', SideNav);
define('tab-strip', TabStrip);
define('status-card', StatusCard);
define('status-panel', StatusPanel);
define('region-map', RegionMap);
define('bar-chart', BarChart);
define('ratio-gauge', RatioGauge);
define('mileage-panel', MileagePanel);
define('more-toggle', MoreToggle);
define('dashboard-app', DashboardApp);
</script>
</body>
</html>
